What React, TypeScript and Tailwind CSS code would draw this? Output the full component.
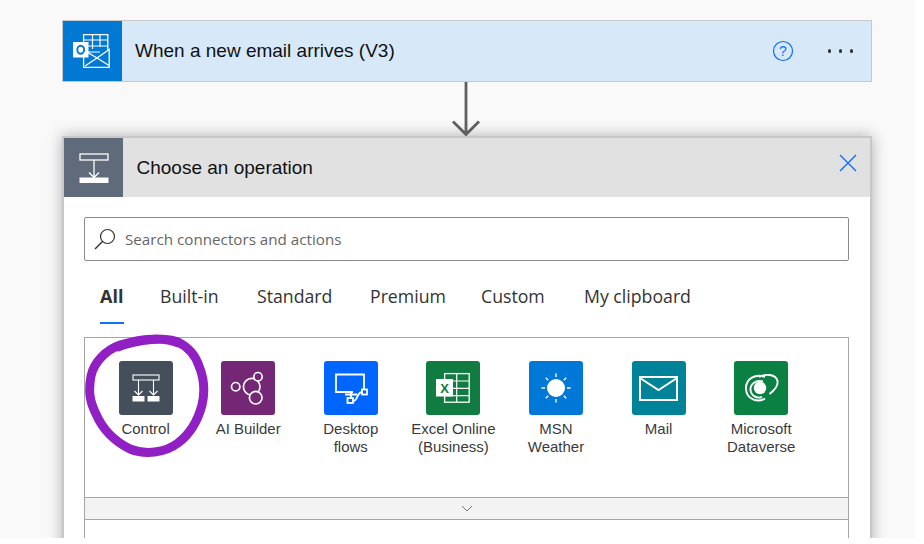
import React from "react";

const sans = "font-['Liberation_Sans',Arial,sans-serif]";
const seg = "font-['Open_Sans','Noto_Sans',sans-serif]";

function OutlookIcon() {
  return (
    <svg width="37" height="34" viewBox="0 0 37 34" fill="none">
      <path d="M10.6 9V0.7h24.2V17" stroke="#fff" strokeWidth="1.3" />
      <path d="M10.6 6h24M19.5 1v14M27 1v12M15 12h19.5M15 18h12" stroke="#fff" strokeWidth="1.2" />
      <path d="M11 22h4l9 3 12-9v18H11z" fill="#0078d4" />
      <path d="M10.6 22v11.3h25.6V15.5L24 24 14 18" stroke="#fff" strokeWidth="1.3" />
      <path d="M12 32l12-8 12 7.5" stroke="#fff" strokeWidth="1.2" />
      <rect x="0" y="8" width="15.5" height="15.5" fill="#fff" />
      <ellipse cx="7.7" cy="15.7" rx="3.4" ry="4" stroke="#0078d4" strokeWidth="1.9" />
    </svg>
  );
}

function ControlHeaderIcon() {
  return (
    <svg width="30" height="30" viewBox="0 0 30 30" fill="none">
      <rect x="1" y="1" width="28" height="6" stroke="#fff" strokeWidth="1.3" />
      <path d="M15 7v17M10 19.5l5 5 5-5" stroke="#fff" strokeWidth="1.3" />
      <rect x="0.5" y="24.5" width="29" height="5.5" fill="#fff" />
    </svg>
  );
}

function ControlIcon() {
  return (
    <svg width="28" height="28" viewBox="0 0 28 28" fill="none">
      <rect x="1" y="1" width="26" height="5" stroke="#fff" strokeWidth="1.1" />
      <path d="M6.5 6v15M2.5 17l4 4 4-4M21.5 6v15M17.5 17l4 4 4-4" stroke="#fff" strokeWidth="1.1" />
      <rect x="0.5" y="22" width="12" height="5.5" fill="#fff" />
      <rect x="15.500" y="22" width="12" height="5.5" fill="#fff" />
    </svg>
  );
}

function AiIcon() {
  return (
    <svg width="54" height="54" viewBox="0 0 54 54" fill="none" stroke="#fff" strokeWidth="1.7">
      <circle cx="14.7" cy="25.7" r="4.2" />
      <circle cx="30.7" cy="25.7" r="8.3" />
      <circle cx="37" cy="15.7" r="4.2" fill="#742774" />
      <circle cx="34.7" cy="36.7" r="6.3" fill="#742774" />
    </svg>
  );
}

function DesktopIcon() {
  return (
    <svg width="54" height="54" viewBox="0 0 54 54" fill="none" stroke="#fff" strokeWidth="1.8">
      <path d="M29 31H12V13.5h28V29" />
      <path d="M21 33.5h12M27 31v6" />
      <rect x="23.5" y="37" width="5.5" height="5" />
      <path d="M29 40c5 0 3.5-8.5 9-9" />
      <rect x="38" y="28.5" width="5" height="5" />
    </svg>
  );
}

function ExcelIcon() {
  return (
    <svg width="54" height="54" viewBox="0 0 54 54" fill="none">
      <rect x="18.6" y="12.6" width="24.6" height="28.6" stroke="#fff" strokeWidth="1.3" />
      <path d="M18 20h25M18 27.3h25M18 34.7h25M30.7 13v28" stroke="#fff" strokeWidth="1.2" />
      <rect x="10" y="18" width="17" height="17.5" fill="#fff" />
      <text x="18.5" y="31.5" textAnchor="middle" fontSize="13" fontWeight="700" fill="#107c41" fontFamily="'Liberation Sans',sans-serif">X</text>
    </svg>
  );
}

function SunIcon() {
  return (
    <svg width="30" height="30" viewBox="0 0 30 30" fill="none">
      <circle cx="15" cy="15" r="9" fill="#fff" />
      <path d="M15 0.5v3.5M15 26v3.5M0.5 15H4M26 15h3.5M4.8 4.8l2.4 2.4M22.8 22.8l2.4 2.4M25.2 4.8l-2.4 2.4M7.2 22.8l-2.4 2.4" stroke="#fff" strokeWidth="1.4" />
    </svg>
  );
}

function MailIcon() {
  return (
    <svg width="39" height="25" viewBox="0 0 39 25" fill="none" stroke="#fff" strokeWidth="2">
      <rect x="1" y="1" width="37" height="23" />
      <path d="M1 2l18.5 12L38 2" />
    </svg>
  );
}

function DataverseIcon() {
  return (
    <svg width="54" height="54" viewBox="0 0 54 54" fill="none" stroke="#fff" strokeWidth="1.9">
      <path d="M31 16C22 12.500 11.500 17 12 28c.5 10.500 12 14 19 9.500" />
      <path d="M29 20.500C22 18.500 16 23 16.500 29c.5 5.500 6.500 9 11.500 7" />
      <path d="M25 16C31 12.500 42 13 43.500 20c1 6-4 10-8 13" />
      <circle cx="26" cy="27" r="6.200" fill="#fff" stroke="none" />
    </svg>
  );
}

const items: { label: string[]; bg: string; icon: React.ReactNode }[] = [
  { label: ["Control"], bg: "bg-[#454f5b]", icon: <ControlIcon /> },
  { label: ["AI Builder"], bg: "bg-[#742774]", icon: <AiIcon /> },
  { label: ["Desktop", "flows"], bg: "bg-[#0066ff]", icon: <DesktopIcon /> },
  { label: ["Excel Online", "(Business)"], bg: "bg-[#107c41]", icon: <ExcelIcon /> },
  { label: ["MSN", "Weather"], bg: "bg-[#0078d7]", icon: <SunIcon /> },
  { label: ["Mail"], bg: "bg-[#008299]", icon: <MailIcon /> },
  { label: ["Microsoft", "Dataverse"], bg: "bg-[#0b8043]", icon: <DataverseIcon /> },
];

const tabs = [
  { t: "All", w: "w-[60px]", active: true },
  { t: "Built-in", w: "w-[97px]" },
  { t: "Standard", w: "w-[113px]" },
  { t: "Premium", w: "w-[111px]" },
  { t: "Custom", w: "w-[103px]" },
  { t: "My clipboard", w: "w-[120px]" },
];

export default function App() {
  return (
    <div className="w-[924px] h-[544px] bg-white overflow-hidden">
      <div className="relative w-[915px] h-[538px] bg-[#f9f9f9] overflow-hidden pt-[20px] pl-[62px]">
        {/* trigger card */}
        <div className="w-[810px] h-[62px] flex border border-[#c8c8c8] bg-[#d7e9f9]">
          <div className="w-[59px] h-full bg-[#0078d4] flex items-center justify-center pr-[2px]">
            <OutlookIcon />
          </div>
          <div className={`flex-1 flex items-center pl-[13px] text-[19px] text-[#111] ${sans}`}>
            When a new email arrives (V3)
          </div>
          <div className="flex items-center mr-[18px]">
            <svg width="22" height="22" viewBox="0 0 22 22" fill="none" className="mr-[34px]">
              <circle cx="11" cy="11" r="9.5" stroke="#0f6fff" strokeWidth="1.2" />
              <text x="11" y="16" textAnchor="middle" fontSize="14" fill="#0f6fff" fontFamily="'Liberation Sans',sans-serif">?</text>
            </svg>
            <div className="flex gap-[7.5px]">
              <span className="w-[3.5px] h-[3.5px] rounded-full bg-[#333]" />
              <span className="w-[3.5px] h-[3.5px] rounded-full bg-[#333]" />
              <span className="w-[3.5px] h-[3.5px] rounded-full bg-[#333]" />
            </div>
          </div>
        </div>

        {/* arrow */}
        <div className="w-[810px] h-[54px] flex justify-center">
          <svg width="30" height="54" viewBox="0 0 30 54" fill="none" className="ml-[-3px]">
            <path d="M15 0v52M2 39.500l13 13 13-13" stroke="#5f5f5f" strokeWidth="2.800" />
          </svg>
        </div>

        {/* panel */}
        <div className="w-[810px] h-[420px] border-2 border-[#c8c8c8] border-b-0 bg-white shadow-[0_0_14px_rgba(0,0,0,0.3)]">
          <div className="h-[59px] flex bg-[#e1e1e1]">
            <div className="w-[59px] h-full bg-[#5f6b7a] flex items-center justify-center">
              <ControlHeaderIcon />
            </div>
            <div className={`flex-1 flex items-center pl-[13.5px] pt-[1px] text-[19px] text-[#111] ${sans}`}>
              Choose an operation
            </div>
            <svg width="18" height="18" viewBox="0 0 18 18" fill="none" className="mt-[16px] mr-[13px]">
              <path d="M1 1l16 16M17 1L1 17" stroke="#0f6fff" strokeWidth="1.4" />
            </svg>
          </div>

          <div className="pl-[20px] pr-[21px] pt-[20px]">
            <div className="h-[44px] border border-[#8a8a8a] rounded-[2px] flex items-center pl-[9px]">
              <svg width="22" height="22" viewBox="0 0 22 22" fill="none" className="mr-[9px] mt-[-1px]">
                <circle cx="13.500" cy="8.500" r="7" stroke="#333" strokeWidth="1.200" />
                <path d="M8.500 13.500L1 21" stroke="#333" strokeWidth="1.400" />
              </svg>
              <span className={`text-[15.2px] text-[#666] ${seg}`}>Search connectors and actions</span>
            </div>

            <div className={`flex h-[64px] pl-[16px] pt-[22px] text-[17.7px] text-[#333] ${seg}`}>
              {tabs.map((t) => (
                <div key={t.t} className={`${t.w} shrink-0 relative leading-[26px] ${t.active ? "font-bold text-[18px]" : ""}`}>
                  {t.t}
                  {t.active && <span className="absolute left-0 top-[39px] w-[24px] h-[2px] bg-[#0f6fff]" />}
                </div>
              ))}
            </div>

            <div className={`border border-[#a6a6a6] border-b-0 mt-[12px] ${sans}`}>
              <div className="h-[159px] flex pl-[9.300px] pt-[23px]">
                {items.map((it) => (
                  <div key={it.label[0]} className="w-[102.600px] shrink-0 flex flex-col items-center">
                    <div className={`w-[54px] h-[54px] rounded-[3px] flex items-center justify-center ${it.bg}`}>
                      {it.icon}
                    </div>
                    <div className="mt-[5px] text-[15px] leading-[18px] text-[#3b3b3b] text-center whitespace-nowrap">
                      {it.label.map((l) => (
                        <div key={l}>{l}</div>
                      ))}
                    </div>
                  </div>
                ))}
              </div>
              <div className="h-[23px] bg-[#f3f3f3] border-y border-[#a6a6a6] flex items-center justify-center">
                <svg width="12" height="7" viewBox="0 0 12 7" fill="none">
                  <path d="M1 1l5 5 5-5" stroke="#777" strokeWidth="1" />
                </svg>
              </div>
              <div className="h-[30px]" />
            </div>
          </div>
        </div>

        {/* hand-drawn highlight */}
        <svg width="140" height="140" viewBox="80 330 140 140" fill="none" className="absolute left-[80px] top-[330px] pointer-events-none blur-[0.5px]">
          <path
            d="M178 343C165 337 142 338 120 345C106 350 94 362 91 376C88 392 90 402 96 414C102 428 112 440 130 449C145 455 165 453 178 443C190 434 198 420 202 405C205 392 204 378 199 366C195 354 188 347 178 342C165 337 140 339 118 347"
            stroke="#9120c4"
            strokeWidth="9"
            strokeLinecap="round"
            strokeLinejoin="round"
          />
        </svg>
      </div>
    </div>
  );
}
